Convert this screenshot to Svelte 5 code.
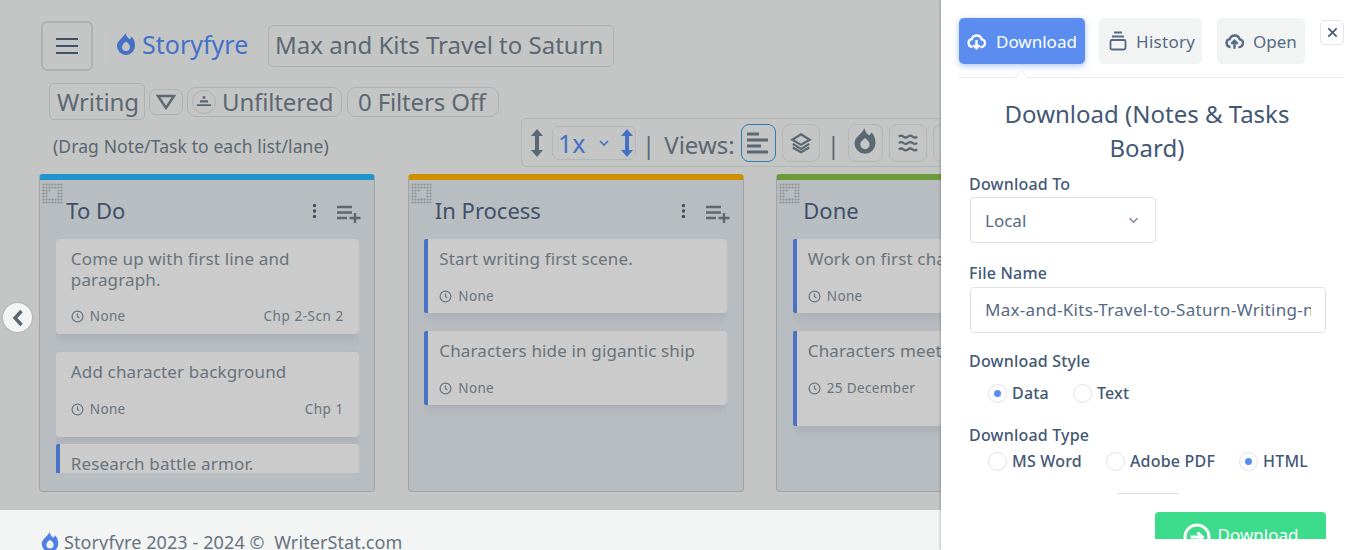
<script>
  const dots = [];
  for (let y = 0; y < 7; y++) {
    for (let x = 0; x < 7; x++) {
      if (x >= 2 && x <= 4 && y >= 2 && y <= 4 && !(x === 2 && y === 2)) continue;
      dots.push({ x: 1.5 + x * 3, y: 1.5 + y * 3 });
    }
  }

  const columns = [
    {
      title: "To Do",
      color: "#2094cc",
      cards: [
        { text: "Come up with first line and paragraph.", date: "None", tag: "Chp 2-Scn 2", cls: "tall" },
        { text: "Add character background", date: "None", tag: "Chp 1", cls: "mid" },
        { text: "Research battle armor.", date: "", tag: "", cls: "accent cut" }
      ]
    },
    {
      title: "In Process",
      color: "#cf9000",
      cards: [
        { text: "Start writing first scene.", date: "None", tag: "", cls: "accent" },
        { text: "Characters hide in gigantic ship", date: "None", tag: "", cls: "accent" }
      ]
    },
    {
      title: "Done",
      color: "#6d9b3c",
      cards: [
        { text: "Work on first chapter outline", date: "None", tag: "", cls: "accent" },
        { text: "Characters meet in the ship", date: "25 December", tag: "", cls: "accent long" }
      ]
    }
  ];
</script>

{#snippet flame(cls)}
  <svg class={cls} viewBox="0 0 24 24" aria-hidden="true">
    <path fill="currentColor" fill-rule="evenodd" d="M11.500 1C12 3.800 13.800 5.800 15.600 7.300L17.800 4.800C20 7 21 10.500 21 14A9 9 0 0 1 3 14C3 8.500 9 6.500 11.500 1ZM12 9.500C10.500 11 8 12.300 8 15A4 4 0 0 0 16 15C16 12.300 13.500 11 12 9.500Z" />
  </svg>
{/snippet}

{#snippet clock()}
  <svg class="clock" viewBox="0 0 24 24" aria-hidden="true">
    <circle cx="12" cy="12" r="10" fill="none" stroke="currentColor" stroke-width="2.200" />
    <path d="M12 6.500V12.500L15.500 14.500" fill="none" stroke="currentColor" stroke-width="2.200" />
  </svg>
{/snippet}

{#snippet updown(cls)}
  <svg class={cls} viewBox="0 0 14 30" aria-hidden="true">
    <path fill="currentColor" d="M7 1 13 8H9V22H13L7 29 1 22H5V8H1Z" />
  </svg>
{/snippet}

{#snippet cloud(dir)}
  <svg class="cloud" viewBox="0 0 24 24" aria-hidden="true">
    <path fill="none" stroke="currentColor" stroke-width="3" d="M7 19a5 5 0 0 1-1-9.900 6.500 6.500 0 0 1 12.500 0A5 5 0 0 1 17 19" />
    {#if dir === "down"}
      <path fill="none" stroke="currentColor" stroke-width="3" d="M12 10v10M8 16.500l4 4 4-4" />
    {:else}
      <path fill="none" stroke="currentColor" stroke-width="3" d="M12 21V11.500M8 15l4-4 4 4" />
    {/if}
  </svg>
{/snippet}

<div class="page">
  <main class="board-page">
    <div class="top-row">
      <button class="menu-btn" type="button" aria-label="Menu">
        <svg viewBox="0 0 22 18" aria-hidden="true"><path d="M0 2H22M0 9H22M0 16H22" stroke="currentColor" stroke-width="2" /></svg>
      </button>
      <div class="brand">{@render flame("brand-flame")}<span>Storyfyre</span></div>
      <div class="book-title">Max and Kits Travel to Saturn</div>
    </div>

    <div class="filter-row">
      <div class="writing">Writing</div>
      <button class="tri-btn" type="button" aria-label="Open">
        <svg viewBox="0 0 20 16" aria-hidden="true"><path d="M2 2H18L10 14Z" fill="none" stroke="currentColor" stroke-width="2.400" /></svg>
      </button>
      <div class="pill unfiltered">
        <span class="pill-icon">
          <svg viewBox="0 0 18 12" aria-hidden="true"><path fill="currentColor" d="M7.500 0h3v3h-3ZM4.500 4.500h9V7h-9ZM1 9h16v2H1Z" /></svg>
        </span>
        Unfiltered
      </div>
      <div class="pill off">0 Filters Off</div>
    </div>

    <div class="tools-row">
      <div class="hint">(Drag Note/Task to each list/lane)</div>
      <div class="tools">
        {@render updown("size-icon")}
        <div class="zoom-select">
          <span>1x</span>
          <svg class="chev" viewBox="0 0 12 8" aria-hidden="true"><path d="M2 2l4 4 4-4" fill="none" stroke="currentColor" stroke-width="1.600" /></svg>
          {@render updown("size-icon blue")}
        </div>
        <span class="sep">|</span>
        <span class="views">Views:</span>
        <button class="tool active" type="button" aria-label="Kanban">
          <svg viewBox="0 0 22 22" aria-hidden="true"><path d="M0 2H12M0 8H21M0 14H14M0 20H21" stroke="currentColor" stroke-width="3" /></svg>
        </button>
        <button class="tool" type="button" aria-label="Stack">
          <svg viewBox="0 0 24 24" aria-hidden="true"><path d="M12 2.500 21.500 8.500 12 14 2.500 8.500ZM3 13l9 5.500 9-5.500M3 17l9 5 9-5" fill="none" stroke="currentColor" stroke-width="2.400" /></svg>
        </button>
        <span class="sep second">|</span>
        <button class="tool flame-tool" type="button" aria-label="Heat">{@render flame("tool-flame")}</button>
        <button class="tool" type="button" aria-label="Flow">
          <svg viewBox="0 0 24 20" aria-hidden="true"><path d="M2 3q2.500-2 5 0t5 0 5 0 5 0M2 10q2.500-2 5 0t5 0 5 0 5 0M2 17q2.500-2 5 0t5 0 5 0 5 0" fill="none" stroke="currentColor" stroke-width="2.400" /></svg>
        </button>
        <button class="tool" type="button" aria-label="More"></button>
      </div>
    </div>

    <div class="board">
      <button class="prev" type="button" aria-label="Previous">
        <svg viewBox="0 0 12 18" aria-hidden="true"><path d="M9.500 2 3 9l6.500 7" fill="none" stroke="currentColor" stroke-width="3.400" /></svg>
      </button>
      {#each columns as col}
        <section class="column" style="border-top-color: {col.color}">
          <svg class="grip" viewBox="0 0 21 21" aria-hidden="true">
            {#each dots as d}<circle cx={d.x} cy={d.y} r="1.100" fill="#8f9394" />{/each}
          </svg>
          <header class="col-head">
            <h2>{col.title}</h2>
            <svg class="kebab" viewBox="0 0 4 16" aria-hidden="true"><circle cx="2" cy="2.500" r="1.700" /><circle cx="2" cy="8" r="1.700" /><circle cx="2" cy="13.500" r="1.700" /></svg>
            <svg class="add" viewBox="0 0 24 18" aria-hidden="true"><path d="M0 2H15M0 7.500H15M0 13H10M12.500 13H23.500M18 8V18.500" stroke="currentColor" stroke-width="2.400" /></svg>
          </header>
          <div class="cards">
            {#each col.cards as card}
              <article class="card {card.cls}">
                <p>{card.text}</p>
                {#if card.date}
                  <div class="meta">
                    <span class="date">{@render clock()}{card.date}</span>
                    {#if card.tag}<span class="tag">{card.tag}</span>{/if}
                  </div>
                {/if}
              </article>
            {/each}
          </div>
        </section>
      {/each}
    </div>
  </main>

  <footer class="foot">
    {@render flame("foot-flame")}
    <span>Storyfyre 2023 - 2024 ©&nbsp; WriterStat.com</span>
  </footer>

  <aside class="drawer">
    <div class="drawer-inner">
      <div class="tabs">
        <button class="tab on" type="button">{@render cloud("down")}Download</button>
        <button class="tab history" type="button">
          <svg class="stack" viewBox="0 0 18 20" aria-hidden="true"><path d="M5 1.500H13M3 5.500H15" stroke="currentColor" stroke-width="1.800" /><rect x="1.500" y="9" width="15" height="9.500" rx="1.500" fill="none" stroke="currentColor" stroke-width="1.800" /></svg>
          History
        </button>
        <button class="tab open" type="button">{@render cloud("up")}Open</button>
        <button class="close" type="button" aria-label="Close">
          <svg viewBox="0 0 12 12" aria-hidden="true"><path d="M1.500 1.500l9 9M10.500 1.500l-9 9" stroke="currentColor" stroke-width="1.800" /></svg>
        </button>
      </div>
      <div class="rule"><span class="notch"></span></div>

      <h1>Download (Notes &amp; Tasks Board)</h1>

      <div class="label first">Download To</div>
      <div class="select">
        <span>Local</span>
        <svg viewBox="0 0 12 8" aria-hidden="true"><path d="M1.500 1.500 6 6l4.500-4.500" fill="none" stroke="currentColor" stroke-width="1.800" /></svg>
      </div>

      <div class="label name">File Name</div>
      <div class="input"><span>Max-and-Kits-Travel-to-Saturn-Writing-notes</span></div>

      <div class="label style-label">Download Style</div>
      <div class="radios style-radios">
        <span class="radio"><i class="dot on"></i>Data</span>
        <span class="radio"><i class="dot"></i>Text</span>
      </div>

      <div class="label type-label">Download Type</div>
      <div class="radios type-radios">
        <span class="radio"><i class="dot"></i>MS Word</span>
        <span class="radio"><i class="dot"></i>Adobe PDF</span>
        <span class="radio"><i class="dot on"></i>HTML</span>
      </div>

      <div class="short-rule"></div>

      <div class="actions">
        <button class="go" type="button">
          <svg viewBox="0 0 28 28" aria-hidden="true"><circle cx="14" cy="14" r="12" fill="none" stroke="currentColor" stroke-width="3" /><path d="M7.500 14H19M14.500 9.500 19.500 14l-5 4.500" fill="none" stroke="currentColor" stroke-width="3" /></svg>
          <span>Download</span>
        </button>
      </div>
    </div>
  </aside>
</div>

<style>
  :global(body) {
    margin: 0;
    background: #fff;
    font-family: "Noto Sans", "Liberation Sans", sans-serif;
  }

  button {
    font: inherit;
    padding: 0;
  }

  .page {
    position: relative;
    width: 1365px;
    height: 550px;
    overflow: hidden;
    background: #f3f5f5;
  }

  .board-page {
    box-sizing: border-box;
    height: 510px;
    padding: 21px 0 0 39px;
    background: #c4c6c5;
    overflow: hidden;
    color: #5b6773;
  }

  .top-row {
    display: flex;
    align-items: center;
    height: 50px;
    padding-left: 2px;
  }

  .menu-btn {
    width: 52px;
    height: 50px;
    box-sizing: border-box;
    border: 2px solid #acb0b2;
    border-radius: 6px;
    background: transparent;
    color: #3f5068;
    display: flex;
    align-items: center;
    justify-content: center;
  }

  .menu-btn svg {
    width: 22px;
    height: 18px;
  }

  .brand {
    display: flex;
    align-items: center;
    gap: 4px;
    width: 145px;
    height: 42px;
    margin-left: 17px;
    padding: 0 0 4px 4px;
    box-sizing: border-box;
    color: #4471c6;
    font-size: 25px;
    background: #c3c5c5;
  }

  .brand-flame {
    width: 24px;
    height: 24px;
    flex: none;
  }

  .book-title {
    margin-left: 13px;
    width: 346px;
    height: 42px;
    box-sizing: border-box;
    border: 1px solid #aeb2b3;
    border-radius: 5px;
    padding-left: 6px;
    font-size: 24px;
    line-height: 37px;
    white-space: nowrap;
  }

  .filter-row {
    display: flex;
    align-items: center;
    margin: 12px 0 0 10px;
    height: 37px;
    gap: 4px;
  }

  .writing {
    width: 96px;
    height: 37px;
    box-sizing: border-box;
    border: 1px solid #aeb2b3;
    border-radius: 5px;
    padding-left: 7px;
    font-size: 24px;
    line-height: 35px;
    letter-spacing: -0.1px;
  }

  .tri-btn {
    width: 34px;
    height: 26px;
    box-sizing: border-box;
    border: 1px solid #aeb2b3;
    border-radius: 7px;
    background: transparent;
    color: #5b6773;
    display: flex;
    align-items: center;
    justify-content: center;
  }

  .tri-btn svg {
    width: 20px;
    height: 16px;
  }

  .pill {
    height: 30px;
    box-sizing: border-box;
    border: 1px solid #aeb2b3;
    border-radius: 9px;
    font-size: 24px;
    line-height: 28px;
    display: flex;
    align-items: center;
    white-space: nowrap;
    letter-spacing: -0.15px;
  }

  .unfiltered {
    width: 155px;
    padding-left: 4px;
    gap: 6px;
  }

  .pill-icon {
    width: 24px;
    height: 24px;
    box-sizing: border-box;
    border: 1px solid #aeb2b3;
    border-radius: 50%;
    display: flex;
    align-items: center;
    justify-content: center;
  }

  .pill-icon svg {
    width: 16px;
    height: 11px;
  }

  .off {
    width: 152px;
    margin-left: 1px;
    padding-left: 10px;
  }

  .tools-row {
    display: flex;
    margin-top: -2px;
    height: 49px;
  }

  .hint {
    width: 482px;
    padding: 17px 0 0 14px;
    box-sizing: border-box;
    font-size: 17.500px;
    letter-spacing: 0.1px;
    line-height: 22px;
    white-space: nowrap;
  }

  .tools {
    display: flex;
    align-items: center;
    flex: none;
    height: 49px;
    width: 520px;
    box-sizing: border-box;
    border: 1px solid #b2b6b7;
    border-radius: 6px;
    padding-left: 8px;
  }

  .size-icon {
    width: 14px;
    height: 30px;
    color: #5b6773;
    flex: none;
  }

  .size-icon.blue {
    color: #4471c6;
    margin-left: 10px;
  }

  .zoom-select {
    display: flex;
    align-items: center;
    width: 84px;
    height: 34px;
    box-sizing: border-box;
    margin-left: 8px;
    padding-left: 5px;
    border: 1px solid #b2b6b7;
    border-radius: 7px;
    color: #4471c6;
    font-size: 25px;
  }

  .chev {
    width: 12px;
    height: 8px;
    margin-left: 12px;
  }

  .sep {
    font-size: 24px;
    margin-left: 6px;
    padding-top: 3px;
  }

  .views {
    font-size: 24px;
    margin-left: 9px;
    padding-top: 3px;
  }

  .sep.second {
    margin-left: 7px;
    margin-right: 8px;
  }

  .tool {
    width: 38px;
    height: 38px;
    margin-left: 6px;
    box-sizing: border-box;
    border: 1px solid #b2b6b7;
    border-radius: 8px;
    background: transparent;
    color: #5b6773;
    display: flex;
    align-items: center;
    justify-content: center;
    flex: none;
  }

  .sep.second + .tool {
    margin-left: 0;
    width: 35px;
  }

  .tool svg {
    width: 22px;
    height: 22px;
  }

  .tool.active {
    width: 35px;
    border-color: #2f7cb2;
    margin-left: 6px;
  }

  .tool .tool-flame {
    width: 28px;
    height: 28px;
    margin-top: -3px;
  }

  .board {
    position: relative;
    display: flex;
    gap: 32.500px;
    margin-top: 7px;
  }

  .prev {
    position: absolute;
    left: -36px;
    top: 129px;
    width: 29px;
    height: 29px;
    border: 0;
    border-radius: 50%;
    background: #f3f5f5;
    color: #5b6773;
    box-shadow: 0 0 2px rgba(0, 0, 0, 0.25);
    display: flex;
    align-items: center;
    justify-content: center;
    z-index: 1;
  }

  .prev svg {
    width: 12px;
    height: 18px;
  }

  .column {
    position: relative;
    width: 336px;
    height: 318px;
    flex: none;
    box-sizing: border-box;
    border: 1px solid #a0a4a7;
    border-top: 6px solid;
    border-radius: 4px;
    background: #b8bdc2;
    overflow: hidden;
  }

  .grip {
    position: absolute;
    left: 2px;
    top: 3px;
    width: 21px;
    height: 21px;
  }

  .col-head {
    display: flex;
    align-items: center;
    height: 40px;
    padding: 10px 13px 1px 26.300px;
    color: #3f5068;
  }

  h2 {
    margin: 0;
    flex: 1;
    font-size: 22px;
    font-weight: 400;
  }

  .kebab {
    width: 5px;
    height: 16px;
    fill: #3f5068;
    margin: 2px 20px 0 0;
  }

  .add {
    width: 24px;
    height: 18px;
    margin-top: 8px;
    color: #62676b;
  }

  .cards {
    width: 303px;
    height: 234px;
    margin: 8px 0 0 15.800px;
    overflow: hidden;
    display: flex;
    flex-direction: column;
    gap: 18px;
  }

  .card {
    flex: none;
    box-sizing: border-box;
    min-height: 74px;
    padding: 9px 15px 0;
    border-radius: 4px;
    background: #cbcbcb;
    color: #69737c;
    box-shadow: 0 5px 10px rgba(90, 100, 110, 0.14);
  }

  .card.accent {
    border-left: 4px solid #4a72c4;
    padding-left: 11px;
    border-radius: 2px 4px 4px 2px;
  }

  .card.tall {
    height: 95px;
  }

  .card.mid {
    height: 85px;
  }

  .card.long {
    height: 95px;
  }

  .card.cut {
    margin-top: -11px;
  }

  .card p {
    margin: 0;
    font-size: 17px;
    letter-spacing: 0.15px;
    line-height: 21px;
  }

  .meta {
    display: flex;
    justify-content: space-between;
    margin-top: 18px;
    font-size: 13.500px;
    letter-spacing: 0.35px;
    line-height: 18px;
  }

  .tall .meta {
    margin-top: 17px;
  }

  .tag {
    letter-spacing: 0.55px;
  }

  .date {
    display: flex;
    align-items: center;
    gap: 6px;
  }

  .clock {
    width: 13px;
    height: 13px;
  }

  .foot {
    height: 40px;
    display: flex;
    align-items: flex-start;
    gap: 3px;
    padding: 21px 0 0 39px;
    box-sizing: border-box;
    color: #66737f;
    font-size: 18px;
    letter-spacing: 0.1px;
    line-height: 22px;
    white-space: nowrap;
  }

  .foot-flame {
    width: 22px;
    height: 22px;
    flex: none;
    color: #4f80e4;
  }

  .drawer {
    position: absolute;
    top: 0;
    right: 0;
    bottom: 0;
    width: 424px;
    background: #fff;
    box-shadow: -1px 0 2px rgba(0, 0, 0, 0.2);
  }

  .drawer-inner {
    height: 539px;
    overflow: hidden;
    box-sizing: border-box;
    padding: 18px 21px 0 18px;
    color: #435875;
  }

  .tabs {
    display: flex;
    align-items: flex-start;
  }

  .tab {
    height: 46px;
    display: flex;
    align-items: center;
    border: 0;
    border-radius: 5px;
    background: #f2f4f4;
    color: #566a83;
    font-size: 17px;
    white-space: nowrap;
  }

  .tab.on {
    width: 126px;
    padding-left: 8px;
    gap: 10px;
    background: #5a8def;
    color: #fff;
    box-shadow: 0 2px 6px rgba(90, 141, 239, 0.5);
  }

  .history {
    width: 103px;
    margin-left: 14px;
    padding-left: 10px;
    gap: 9px;
    letter-spacing: 0.3px;
  }

  .open {
    width: 88px;
    margin-left: 15px;
    padding-left: 8px;
    gap: 9px;
  }

  .cloud {
    width: 19px;
    height: 19px;
    flex: none;
  }

  .stack {
    width: 18px;
    height: 20px;
    flex: none;
  }

  .close {
    width: 24px;
    height: 25px;
    margin: 2px 0 0 15px;
    box-sizing: border-box;
    border: 1px solid #e3e6ea;
    border-radius: 5px;
    background: #fff;
    color: #435875;
    display: flex;
    align-items: center;
    justify-content: center;
  }

  .close svg {
    width: 11px;
    height: 11px;
  }

  .rule {
    position: relative;
    height: 1px;
    margin-top: 13px;
    width: 385px;
    background: #e8eaec;
  }

  .notch {
    position: absolute;
    left: 57px;
    top: -6px;
    width: 11px;
    height: 11px;
    transform: rotate(45deg) scale(0.8);
    background: #fff;
    border: 1px solid #e8eaec;
    border-right: 0;
    border-bottom: 0;
    box-sizing: border-box;
  }

  h1 {
    margin: 19px 0 0 10px;
    width: 356px;
    text-align: center;
    font-size: 24px;
    font-weight: 400;
    line-height: 34px;
  }

  .label {
    margin-left: 10px;
    font-size: 16px;
    font-weight: 500;
    letter-spacing: 0.2px;
    line-height: 20px;
  }

  .first {
    margin-top: 9px;
  }

  .select {
    display: flex;
    align-items: center;
    justify-content: space-between;
    width: 186px;
    height: 46px;
    margin: 3px 0 0 11px;
    padding: 0 16px 0 14px;
    box-sizing: border-box;
    border: 1px solid #dfe2e6;
    border-radius: 4px;
    font-size: 17px;
    color: #566a83;
  }

  .select svg {
    width: 11px;
    height: 7px;
    color: #7c8a99;
  }

  .name {
    margin-top: 20px;
  }

  .input {
    width: 356px;
    height: 46px;
    margin: 4px 0 0 11px;
    padding: 0 14px;
    box-sizing: border-box;
    border: 1px solid #dfe2e6;
    border-radius: 4px;
    font-size: 17px;
    letter-spacing: 0.3px;
    line-height: 44px;
    color: #566a83;
  }

  .input span {
    display: block;
    overflow: hidden;
    white-space: nowrap;
  }

  .style-label {
    margin-top: 18px;
  }

  .radios {
    display: flex;
    margin-left: 29px;
    font-size: 16px;
    font-weight: 500;
    letter-spacing: 0.2px;
  }

  .style-radios {
    margin-top: 12px;
    gap: 24px;
  }

  .type-radios {
    margin-top: 6px;
    gap: 24px;
  }

  .radio {
    display: flex;
    align-items: center;
    gap: 5px;
    line-height: 20px;
  }

  .dot {
    width: 19px;
    height: 19px;
    box-sizing: border-box;
    border: 1px solid #dfe2e6;
    border-radius: 50%;
    display: block;
    position: relative;
  }

  .dot.on::after {
    content: "";
    position: absolute;
    left: 5px;
    top: 5px;
    width: 7px;
    height: 7px;
    border-radius: 50%;
    background: #5a8def;
  }

  .type-label {
    margin-top: 22px;
  }

  .short-rule {
    width: 60px;
    height: 1px;
    margin: 22px 0 0 159px;
    background: #d9dcdf;
  }

  .actions {
    display: flex;
    justify-content: flex-end;
    margin: 18px 0 0;
    width: 367px;
  }

  .go {
    width: 171px;
    height: 46px;
    display: flex;
    align-items: center;
    justify-content: center;
    gap: 7px;
    border: 0;
    border-radius: 4px;
    background: #3cdc8c;
    color: #fff;
    font-size: 17px;
  }

  .go span {
    margin-top: -2px;
  }

  .go svg {
    width: 28px;
    height: 28px;
    margin-top: 3px;
  }
</style>
